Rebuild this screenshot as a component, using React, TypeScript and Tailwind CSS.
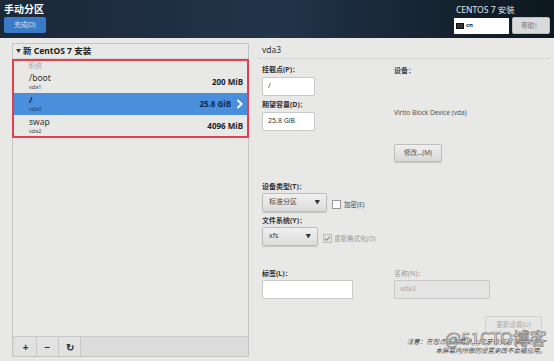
import React from 'react';

const font = { fontFamily: '"Noto Sans", "Noto Sans CJK SC", sans-serif' };

function Dropdown({ label, w }: { label: string; w: string }) {
  return (
    <div className={`${w} h-[19px] flex items-center justify-between px-[6px] rounded-[2px] border border-[#bdbdbd] bg-gradient-to-b from-[#f0f0f0] to-[#dcdcdc] shadow-[0_1px_1px_rgba(0,0,0,0.15)]`}>
      <span className="text-[7px] text-[#444]">{label}</span>
      <span className="text-[5.5px] text-[#333]">▼</span>
    </div>
  );
}

function Field({ value, w, disabled }: { value: string; w: string; disabled?: boolean }) {
  return (
    <div className={`${w} h-[19px] flex items-center px-[5px] border border-[#c8c8c8] rounded-[1px] ${disabled ? 'bg-[#e4e4e4]' : 'bg-white'}`}>
      <span className={`text-[7px] ${disabled ? 'text-[#a8a8a8]' : 'text-[#333]'}`}>{value}</span>
    </div>
  );
}

export default function App() {
  const rows = [
    { mount: '/boot', dev: 'vda1', size: '200 MiB', selected: false },
    { mount: '/', dev: 'vda3', size: '25.8 GiB', selected: true },
    { mount: 'swap', dev: 'vda2', size: '4096 MiB', selected: false },
  ];

  return (
    <div className="w-[554px] h-[361px] bg-[#e8e8e7] relative overflow-hidden" style={font}>
      {/* header */}
      <div className="h-[38px] flex justify-between bg-gradient-to-r from-[#1b2838] via-[#22344a] to-[#0d1820]">
        <div className="pl-[4px] pt-[3px]">
          <div className="text-[10px] font-bold text-white leading-[12px]">手动分区</div>
          <div className="mt-[2px] w-[42px] h-[16px] bg-[#3a7bc8] rounded-[2px] flex items-center justify-center">
            <span className="text-[6.5px] text-[#cfe0f5]">完成(D)</span>
          </div>
        </div>
        <div className="pr-[4px] pt-[4px] w-[100px] flex flex-col items-start">
          <div className="text-[8.5px] text-[#e6e6e6] leading-[11px] ml-[2px]">CENTOS 7 安装</div>
          <div className="mt-[2px] flex items-center gap-[3px]">
            <div className="w-[55px] h-[16px] bg-white flex items-center gap-[2px] px-[2px]">
              <div className="w-[8px] h-[6px] bg-[#333] border border-[#111]" />
              <span className="text-[6px] font-bold text-[#222]">cn</span>
            </div>
            <div className="w-[38px] h-[17px] bg-[#dadada] border border-[#bcbcbc] rounded-[2px] flex items-center justify-center">
              <span className="text-[6.5px] text-[#777]">帮助！</span>
            </div>
          </div>
        </div>
      </div>

      <div className="flex h-[323px]">
        {/* left panel */}
        <div className="ml-[12px] mt-[5px] w-[237px] h-[314px] border border-[#c4c4c4] bg-[#e8e8e7] flex flex-col">
          <div className="h-[15px] flex items-center gap-[2px] px-[3px] border-b border-[#d6d6d6]">
            <span className="text-[5px] text-[#333]">▼</span>
            <span className="text-[8.5px] font-bold text-[#222]">新 CentOS 7 安装</span>
          </div>
          <div className="-mx-[1px] h-[79px] border-2 border-[#e0404f] overflow-hidden">
            <div className="h-[10px] pl-[14px] text-[7px] leading-[10px] text-[#a8a8a8]">系统</div>
            {rows.map((r) => (
              <div
                key={r.mount}
                className={`h-[22px] flex items-center justify-between pl-[15px] pr-[4px] ${r.selected ? 'bg-[#4a8fdb]' : ''}`}
              >
                <div className="flex flex-col leading-none">
                  <span className={`text-[8.5px] ${r.selected ? 'text-[#102850] font-bold' : 'text-[#333]'}`}>{r.mount}</span>
                  <span className={`mt-[2px] text-[5.5px] ${r.selected ? 'text-[#1a3a66]' : 'text-[#444]'}`}>{r.dev}</span>
                </div>
                <div className="flex items-center gap-[5px]">
                  <span className={`text-[8px] font-bold ${r.selected ? 'text-[#0f2a55]' : 'text-[#222]'}`}>{r.size}</span>
                  {r.selected && (
                    <svg width="7" height="10" viewBox="0 0 7 10">
                      <path d="M1.5 1 L5.5 5 L1.5 9" stroke="white" strokeWidth="2" fill="none" />
                    </svg>
                  )}
                </div>
              </div>
            ))}
          </div>
          <div className="flex-1" />
          <div className="h-[20px] bg-[#dcdcdc] border-t border-[#cacaca] flex items-stretch pl-[2px]">
            {['+', '−', '↻'].map((b) => (
              <div key={b} className="w-[22px] border-r border-[#c8c8c8] bg-[#e2e2e2] flex items-center justify-center">
                <span className="text-[10px] font-bold text-[#333] leading-none">{b}</span>
              </div>
            ))}
          </div>
        </div>

        {/* right section */}
        <div className="flex-1 ml-[9px] mr-[4px] mt-[5px] flex flex-col">
          <div className="h-[16px] pl-[4px] flex items-center border-b border-[#d6d6d6]">
            <span className="text-[8.5px] text-[#333]">vda3</span>
          </div>
          <div className="pl-[4px] pt-[6px] flex">
            <div className="w-[132px]">
              <div className="text-[7px] font-bold text-[#333] leading-[10px]">挂载点(P)：</div>
              <div className="mt-[2px]"><Field value="/" w="w-[53px]" /></div>
              <div className="mt-[4px] text-[7px] font-bold text-[#333] leading-[10px]">期望容量(D)：</div>
              <div className="mt-[2px]"><Field value="25.8 GiB" w="w-[53px]" /></div>
            </div>
            <div>
              <div className="text-[7px] font-bold text-[#444] leading-[10px] mt-[1px]">设备：</div>
              <div className="mt-[32px] text-[6.5px] text-[#555]">Virtio Block Device (vda)</div>
              <div className="mt-[26px] w-[48px] h-[18px] bg-gradient-to-b from-[#f0f0f0] to-[#d8d8d8] border border-[#bdbdbd] rounded-[2px] shadow-[0_1px_1px_rgba(0,0,0,0.15)] flex items-center justify-center">
                <span className="text-[6.5px] text-[#555]">修改...(M)</span>
              </div>
            </div>
          </div>

          <div className="pl-[4px] mt-[20px]">
            <div className="text-[7px] font-bold text-[#333] leading-[10px]">设备类型(T)：</div>
            <div className="mt-[1px] flex items-center gap-[5px]">
              <Dropdown label="标准分区" w="w-[65px]" />
              <div className="flex items-center gap-[3px] mt-[5px]">
                <div className="w-[9px] h-[9px] bg-white border border-[#999]" />
                <span className="text-[6.5px] text-[#444]">加密(E)</span>
              </div>
            </div>
            <div className="mt-[4px] text-[7px] font-bold text-[#333] leading-[10px]">文件系统(Y)：</div>
            <div className="mt-[1px] flex items-center gap-[5px]">
              <Dropdown label="xfs" w="w-[56px]" />
              <div className="flex items-center gap-[2px] mt-[5px]">
                <div className="w-[9px] h-[9px] border border-[#bbb] bg-[#e4e4e4] flex items-center justify-center">
                  <svg width="8" height="7" viewBox="0 0 8 7">
                    <path d="M1 3.5 L3 5.5 L7 1" stroke="#999" strokeWidth="1.4" fill="none" />
                  </svg>
                </div>
                <span className="text-[6.5px] text-[#9a9a9a]">重新格式化(O)</span>
              </div>
            </div>
          </div>

          <div className="pl-[4px] mt-[23px] flex">
            <div className="w-[132px]">
              <div className="text-[7px] font-bold text-[#333] leading-[10px]">标签(L)：</div>
              <div className="mt-[1px]"><Field value="" w="w-[91px]" /></div>
            </div>
            <div>
              <div className="text-[7px] text-[#9a9a9a] leading-[10px]">名称(N)：</div>
              <div className="mt-[1px]"><Field value="vda3" w="w-[96px]" disabled /></div>
            </div>
          </div>

          <div className="mt-[17px] flex justify-end pr-[8px]">
            <div className="w-[57px] h-[19px] border border-[#d0d0d0] bg-[#e6e6e6] rounded-[2px] flex items-center justify-center">
              <span className="text-[6.5px] text-[#aaa]">更新设置(U)</span>
            </div>
          </div>
          <div className="mt-[2px] flex flex-col items-end pr-[4px] leading-[9px]">
            <span className="text-[6.5px] italic text-[#444]">注意：在您点击主菜单上的'开始安装'按钮之前，</span>
            <span className="text-[6.5px] italic text-[#444]">本屏幕内所做的设置更改不会被应用。</span>
          </div>
        </div>
      </div>

      {/* watermark */}
      <div
        className="absolute left-[445px] top-[329px] text-[17px] text-[#f4f4f4] leading-none"
        style={{ fontFamily: '"Noto Sans CJK SC", sans-serif', WebkitTextStroke: '0.7px #7a7a7a' }}
      >
        @51CTO博客
      </div>
    </div>
  );
}
